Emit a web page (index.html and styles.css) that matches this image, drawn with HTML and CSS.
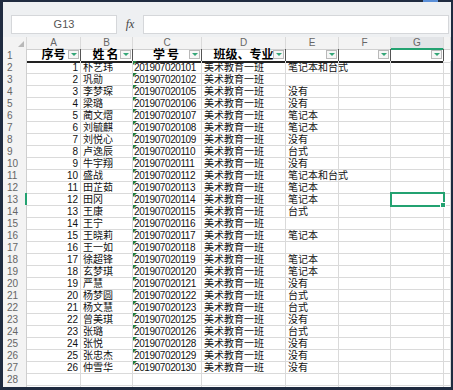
FILE: index.html
```html
<!DOCTYPE html>
<html lang="zh-CN">
<head>
  <meta charset="UTF-8" />
  <title>学生名单</title>
  <link rel="stylesheet" href="styles.css">
</head>
<body>
  <div class="window">
    <span class="title-tab"></span>
    <div class="app">
      <div class="toolbar">
        <div class="name-box">G13</div>
        <div class="fx">fx</div>
        <div class="formula"></div>
      </div>

      <div class="sheet">
        <div class="row col-head">
          <span class="corner"></span><span>A</span><span>B</span><span>C</span><span>D</span><span>E</span><span>F</span><span class="picked">G</span><span></span>
        </div>
        <div class="row title-row">
          <span class="rh">1</span>
          <span class="t">序号<i class="dd"></i></span>
          <span class="t wide">姓名<i class="dd"></i></span>
          <span class="t wide">学号<i class="dd"></i></span>
          <span class="t">班级、专业<i class="dd"></i></span>
          <span class="t"><i class="dd"></i></span>
          <span class="t"><i class="dd"></i></span>
          <span class="t"><i class="dd"></i></span>
          <span class="end"></span>
        </div>

        <div class="row"><span class="rh">2</span><span class="num">1</span><span>朴艺玮</span><span class="id">201907020101</span><span>美术教育一班</span><span>笔记本和台式</span><span></span><span></span><span></span></div>
        <div class="row"><span class="rh">3</span><span class="num">2</span><span>巩勋</span><span class="id">201907020102</span><span>美术教育一班</span><span></span><span></span><span></span><span></span></div>
        <div class="row"><span class="rh">4</span><span class="num">3</span><span>李梦琛</span><span class="id">201907020105</span><span>美术教育一班</span><span>没有</span><span></span><span></span><span></span></div>
        <div class="row"><span class="rh">5</span><span class="num">4</span><span>梁璐</span><span class="id">201907020106</span><span>美术教育一班</span><span>没有</span><span></span><span></span><span></span></div>
        <div class="row"><span class="rh">6</span><span class="num">5</span><span>蔺文熠</span><span class="id">201907020107</span><span>美术教育一班</span><span>笔记本</span><span></span><span></span><span></span></div>
        <div class="row"><span class="rh">7</span><span class="num">6</span><span>刘毓麒</span><span class="id">201907020108</span><span>美术教育一班</span><span>笔记本</span><span></span><span></span><span></span></div>
        <div class="row"><span class="rh">8</span><span class="num">7</span><span>刘悦心</span><span class="id">201907020109</span><span>美术教育一班</span><span>没有</span><span></span><span></span><span></span></div>
        <div class="row"><span class="rh">9</span><span class="num">8</span><span>卢逸辰</span><span class="id">201907020110</span><span>美术教育一班</span><span>台式</span><span></span><span></span><span></span></div>
        <div class="row"><span class="rh">10</span><span class="num">9</span><span>牛宇翔</span><span class="id">201907020111</span><span>美术教育一班</span><span>没有</span><span></span><span></span><span></span></div>
        <div class="row"><span class="rh">11</span><span class="num">10</span><span>盛战</span><span class="id">201907020112</span><span>美术教育一班</span><span>笔记本和台式</span><span></span><span></span><span></span></div>
        <div class="row"><span class="rh">12</span><span class="num">11</span><span>田芷茹</span><span class="id">201907020113</span><span>美术教育一班</span><span>笔记本</span><span></span><span></span><span></span></div>
        <div class="row"><span class="rh current">13</span><span class="num">12</span><span>田冈</span><span class="id">201907020114</span><span>美术教育一班</span><span>笔记本</span><span></span><span class="sel"></span><span></span></div>
        <div class="row"><span class="rh">14</span><span class="num">13</span><span>王康</span><span class="id">201907020115</span><span>美术教育一班</span><span>台式</span><span></span><span></span><span></span></div>
        <div class="row"><span class="rh">15</span><span class="num">14</span><span>王宁</span><span class="id">201907020116</span><span>美术教育一班</span><span></span><span></span><span></span><span></span></div>
        <div class="row"><span class="rh">16</span><span class="num">15</span><span>王晓莉</span><span class="id">201907020117</span><span>美术教育一班</span><span>笔记本</span><span></span><span></span><span></span></div>
        <div class="row"><span class="rh">17</span><span class="num">16</span><span>王一如</span><span class="id">201907020118</span><span>美术教育一班</span><span></span><span></span><span></span><span></span></div>
        <div class="row"><span class="rh">18</span><span class="num">17</span><span>徐超锋</span><span class="id">201907020119</span><span>美术教育一班</span><span>笔记本</span><span></span><span></span><span></span></div>
        <div class="row"><span class="rh">19</span><span class="num">18</span><span>玄梦琪</span><span class="id">201907020120</span><span>美术教育一班</span><span>笔记本</span><span></span><span></span><span></span></div>
        <div class="row"><span class="rh">20</span><span class="num">19</span><span>严慧</span><span class="id">201907020121</span><span>美术教育一班</span><span>没有</span><span></span><span></span><span></span></div>
        <div class="row"><span class="rh">21</span><span class="num">20</span><span>杨梦圆</span><span class="id">201907020122</span><span>美术教育一班</span><span>台式</span><span></span><span></span><span></span></div>
        <div class="row"><span class="rh">22</span><span class="num">21</span><span>杨文慧</span><span class="id">201907020123</span><span>美术教育一班</span><span>台式</span><span></span><span></span><span></span></div>
        <div class="row"><span class="rh">23</span><span class="num">22</span><span>曾美琪</span><span class="id">201907020125</span><span>美术教育一班</span><span>没有</span><span></span><span></span><span></span></div>
        <div class="row"><span class="rh">24</span><span class="num">23</span><span>张璐</span><span class="id">201907020126</span><span>美术教育一班</span><span>台式</span><span></span><span></span><span></span></div>
        <div class="row"><span class="rh">25</span><span class="num">24</span><span>张悦</span><span class="id">201907020128</span><span>美术教育一班</span><span>没有</span><span></span><span></span><span></span></div>
        <div class="row"><span class="rh">26</span><span class="num">25</span><span>张忠杰</span><span class="id">201907020129</span><span>美术教育一班</span><span>没有</span><span></span><span></span><span></span></div>
        <div class="row"><span class="rh">27</span><span class="num">26</span><span>仲雪华</span><span class="id">201907020130</span><span>美术教育一班</span><span>没有</span><span></span><span></span><span></span></div>
        <div class="row"><span class="rh">28</span><span></span><span></span><span></span><span></span><span></span><span></span><span></span><span></span></div>
        <div class="row"><span class="rh"></span><span></span><span></span><span></span><span></span><span></span><span></span><span></span><span></span></div>
      </div>
    </div>
  </div>
</body>
</html>
```

FILE: styles.css
```css
body {
  margin: 0;
  font-family: "Liberation Sans", "Noto Sans CJK SC", sans-serif;
}

.window {
  position: relative;
  width: 453px;
  height: 390px;
  box-sizing: border-box;
  padding: 2px 2px 3px 3px;
  background-color: #1f2b40;
  overflow: hidden;
}

.title-tab {
  position: absolute;
  top: 0;
  left: 423px;
  width: 15px;
  height: 2px;
  background-color: #5a8fd8;
}

.app {
  height: 100%;
  background-color: #fff;
  overflow: hidden;
}

/* name box + formula bar */
.toolbar {
  display: flex;
  align-items: flex-start;
  height: 35px;
  box-sizing: border-box;
  padding: 13px 2px 0 8px;
  background-color: #eef0f2;
}

.name-box {
  width: 106px;
  height: 19px;
  box-sizing: border-box;
  border: 1px solid #d5d7da;
  background-color: #fff;
  color: #555;
  font-size: 11px;
  line-height: 17px;
  text-align: center;
}

.fx {
  width: 26px;
  font-family: "Liberation Serif", serif;
  font-style: italic;
  font-size: 12px;
  line-height: 19px;
  color: #444;
  text-align: center;
}

.formula {
  flex: 1;
  height: 19px;
  box-sizing: border-box;
  border: 1px solid #d5d7da;
  background-color: #fff;
}

/* grid */
.row {
  display: grid;
  grid-template-columns: 24px 54px 52px 69px 84px 53px 52px 53px 7px;
  height: 12px;
}

.row > span {
  position: relative;
  box-sizing: border-box;
  border-right: 1px solid #dadada;
  border-bottom: 1px solid #dadada;
  padding: 2px 0 0 2px;
  font-size: 10px;
  line-height: 10px;
  color: #111;
  white-space: nowrap;
}

.col-head > span {
  padding: 1px 0 0;
  background-color: #f3f3f3;
  border-bottom-color: #d0d0d0;
  color: #666;
  text-align: center;
}

.col-head .picked {
  background-color: #e2e4e7;
  border-bottom: 2px solid #23a271;
}

.corner::after {
  content: "";
  position: absolute;
  right: 2px;
  bottom: 2px;
  border-left: 6px solid transparent;
  border-bottom: 6px solid #b8b8b8;
}

.row .rh {
  padding-left: 4px;
  background-color: #f3f3f3;
  border-right-color: #cfcfcf;
  color: #666;
}

.row .rh.current {
  border-right: 2px solid #23a271;
}

.row .num {
  padding-left: 0;
  padding-right: 2px;
  text-align: right;
}

.row .id {
  padding-left: 1px;
  letter-spacing: -0.4px;
}

.id::before {
  content: "";
  position: absolute;
  top: 0;
  left: 0;
  border-top: 4px solid #1f7d3e;
  border-right: 4px solid transparent;
}

/* header row with filter buttons */
.title-row .t {
  padding: 1px 0 0;
  border-right-color: #555;
  border-bottom: 2px solid #222;
  font-size: 12px;
  font-weight: bold;
  line-height: 11px;
  color: #000;
  text-align: center;
}

.title-row .t.wide {
  letter-spacing: 2px;
}

.title-row .end {
  border-right: none;
}

.dd {
  position: absolute;
  top: 1px;
  right: 1px;
  width: 11px;
  height: 9px;
  box-sizing: border-box;
  border: 1px solid #b9b9b9;
  background-color: #f6f6f6;
}

.dd::after {
  content: "";
  position: absolute;
  left: 2px;
  top: 2px;
  border-left: 3px solid transparent;
  border-right: 3px solid transparent;
  border-top: 3px solid #33a677;
}

/* active cell */
.row .sel {
  z-index: 1;
  outline: 2px solid #23a271;
  outline-offset: -1px;
}

.sel::after {
  content: "";
  position: absolute;
  right: -3px;
  bottom: -3px;
  width: 4px;
  height: 4px;
  background-color: #23a271;
  border: 1px solid #fff;
}
```
